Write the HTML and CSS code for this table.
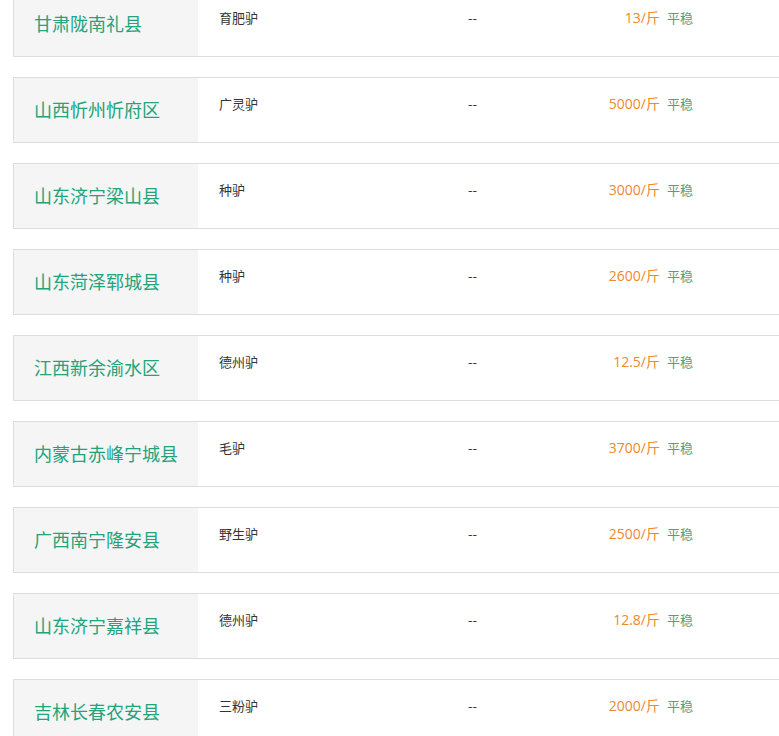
FILE: index.html
```html
<!DOCTYPE html>
<html lang="zh-CN">
<head>
<meta charset="utf-8">
<title>驴价格行情</title>
<link rel="stylesheet" href="styles.css">
</head>
<body>
<ul class="list">
  <li class="row"><div class="area">甘肃陇南礼县</div><div class="info"><span class="breed">育肥驴</span><span class="dash">--</span><span class="price">13/斤</span><span class="trend">平稳</span></div></li>
  <li class="row"><div class="area">山西忻州忻府区</div><div class="info"><span class="breed">广灵驴</span><span class="dash">--</span><span class="price">5000/斤</span><span class="trend">平稳</span></div></li>
  <li class="row"><div class="area">山东济宁梁山县</div><div class="info"><span class="breed">种驴</span><span class="dash">--</span><span class="price">3000/斤</span><span class="trend">平稳</span></div></li>
  <li class="row"><div class="area">山东菏泽郓城县</div><div class="info"><span class="breed">种驴</span><span class="dash">--</span><span class="price">2600/斤</span><span class="trend">平稳</span></div></li>
  <li class="row"><div class="area">江西新余渝水区</div><div class="info"><span class="breed">德州驴</span><span class="dash">--</span><span class="price">12.5/斤</span><span class="trend">平稳</span></div></li>
  <li class="row"><div class="area">内蒙古赤峰宁城县</div><div class="info"><span class="breed">毛驴</span><span class="dash">--</span><span class="price">3700/斤</span><span class="trend">平稳</span></div></li>
  <li class="row"><div class="area">广西南宁隆安县</div><div class="info"><span class="breed">野生驴</span><span class="dash">--</span><span class="price">2500/斤</span><span class="trend">平稳</span></div></li>
  <li class="row"><div class="area">山东济宁嘉祥县</div><div class="info"><span class="breed">德州驴</span><span class="dash">--</span><span class="price">12.8/斤</span><span class="trend">平稳</span></div></li>
  <li class="row"><div class="area">吉林长春农安县</div><div class="info"><span class="breed">三粉驴</span><span class="dash">--</span><span class="price">2000/斤</span><span class="trend">平稳</span></div></li>
</ul>
</body>
</html>
```
FILE: styles.css
```css
html, body {
  margin: 0;
  padding: 0;
  overflow: hidden;
  background: #fff;
  font-family: "Noto Sans CJK SC", "Noto Sans", sans-serif;
}
.list {
  list-style: none;
  margin: -9px 0 0 0;
  padding: 0 0 0 13px;
}
.row {
  display: flex;
  width: 800px;
  height: 64px;
  border: 1px solid #dddddd;
  margin-bottom: 20px;
}
.area {
  width: 164px;
  padding-left: 20px;
  background: #f5f5f5;
  color: #22a37c;
  font-size: 18px;
  line-height: 63px;
  white-space: nowrap;
}
.info {
  display: grid;
  grid-template-columns: 249px 100px 92px auto;
  align-items: start;
  padding: 16px 0 0 21px;
  font-size: 13px;
  line-height: 20px;
}
.breed { color: #333; }
.dash { color: #333; }
.price {
  color: #f0882c;
  text-align: right;
  font-size: 14px;
  font-family: "Open Sans", "Noto Sans CJK SC", sans-serif;
}
.trend {
  color: #5c9c7c;
  margin-left: 7px;
}
```
